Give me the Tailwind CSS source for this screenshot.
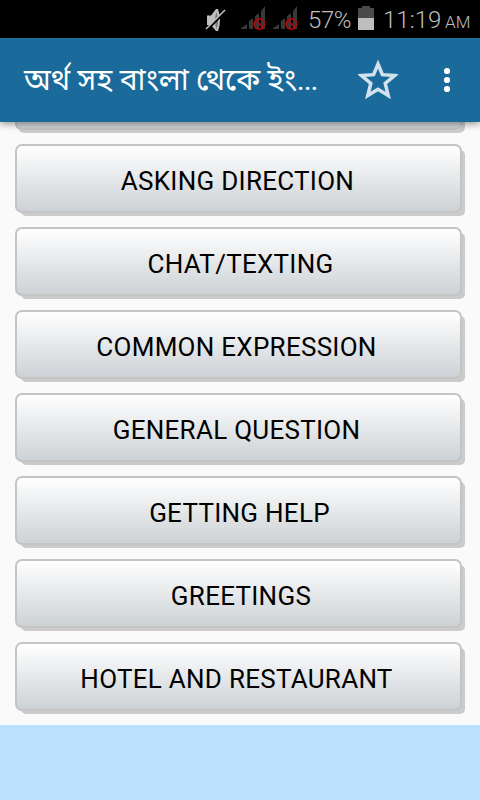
<!DOCTYPE html>
<html lang="bn">
<head>
<meta charset="utf-8">
<title>Phrasebook</title>
<script src="https://cdn.jsdelivr.net/npm/@tailwindcss/browser@4"></script>
</head>
<body class="w-[480px] h-[800px] overflow-hidden bg-[#fafafa] font-['Roboto','Noto_Sans_Bengali',sans-serif] flex flex-col">
<header class="relative z-10 h-[38px] shrink-0 bg-black flex items-center text-[#bebebe]">
  <svg class="ml-[204px] w-[24px] h-[38px] shrink-0" viewBox="204 0 24 38"><path d="M207 15.500h4l5-6.500h2q4 11 0 22h-2l-5-6h-4z" fill="#bebebe"/><path d="M216.500 12q-3 8 0 17 3-8 0-17" fill="#777"/><path d="M206.500 30.500L225.500 11.500" stroke="#000" stroke-width="2.200"/><path d="M206 29L225 10" stroke="#bebebe" stroke-width="1.600"/></svg>
  <svg class="ml-[12px] w-[60px] h-[38px] shrink-0" viewBox="240 0 60 38">
    <g id="signal"><path d="M241 29v-1l6-4v5zM249 29v-8l4-3v11zM255 29V16l4-3v16zM261 29V11l4-5v23z" fill="#383838"/><circle cx="259.300" cy="24" r="5.200" fill="none" stroke="#a80d0d" stroke-width="1.700"/><path d="M255.600 20.300l7.400 7.400" stroke="#a80d0d" stroke-width="1.700"/></g>
    <use href="#signal" x="32"/>
  </svg>
  <span class="ml-[8px] w-[50px] text-[24px] leading-[38px] whitespace-nowrap pt-[2px] tracking-[-0.4px] font-light">57%</span>
  <svg class="w-[16px] h-[38px] shrink-0" viewBox="358 0 16 38"><path d="M358 8h4V6h8v2h4v10h-16z" fill="#4b4b4b"/><path d="M358 18h16v12h-16z" fill="#bebebe"/></svg>
  <span class="ml-[9px] w-[59px] text-[24px] leading-[38px] whitespace-nowrap pt-[2px] font-light">11:19</span>
  <span class="ml-[3px] text-[17px] leading-[38px] whitespace-nowrap pt-[6px] font-light">AM</span>
</header>
<nav class="relative z-10 h-[84px] shrink-0 bg-[#1a6a9b] flex items-center text-white shadow-[0_2px_7px_rgba(0,0,0,0.4)]">
  <h1 class="ml-[24px] w-[310px] text-[30px] leading-[40px] whitespace-nowrap">অর্থ সহ বাংলা থেকে ইং<span class="tracking-[-1px]">...</span></h1>
  <svg class="ml-[24px] w-[40px] h-[84px] shrink-0" viewBox="358 38 40 84"><path d="M378 64l4.400 10.700 12.200.9-9.400 7.900 3 12-10.200-6.300-10.200 6.300 3-12-9.400-7.900 12.200-.9z" fill="none" stroke="#d2e2ec" stroke-width="3.500"/></svg>
  <svg class="ml-[42px] w-[14px] h-[84px] shrink-0" viewBox="440 38 14 84" fill="#fff"><circle cx="447" cy="71" r="3.100"/><circle cx="447" cy="80" r="3.100"/><circle cx="447" cy="89" r="3.100"/></svg>
</nav>
<main class="h-[603px] shrink-0 overflow-hidden">
  <div class="flex flex-col gap-[14px] pl-[15px] -mt-[61px] text-[26px] tracking-[0.27px] text-black whitespace-nowrap">
    <div class="w-[447px] h-[69px] shrink-0 rounded-[6px] border-2 border-[#c4c4c4] bg-linear-to-b from-white to-[#cdd2d6] shadow-[3px_3px_0_#cbcbcb]"></div>
    <button class="relative w-[450px] h-[69px] shrink-0"><span class="absolute left-[6px] top-[6px] w-[444px] h-[66px] rounded-[5px] bg-[#cbcbcb]"></span><span class="relative flex w-[447px] h-[69px] items-center justify-center rounded-[7px] border-2 border-[#c4c4c4] bg-linear-to-b from-white to-[#cdd2d6] pt-[5px] pr-[2px]">ASKING DIRECTION</span></button>
    <button class="relative w-[450px] h-[69px] shrink-0"><span class="absolute left-[6px] top-[6px] w-[444px] h-[66px] rounded-[5px] bg-[#cbcbcb]"></span><span class="relative flex w-[447px] h-[69px] items-center justify-center rounded-[7px] border-2 border-[#c4c4c4] bg-linear-to-b from-white to-[#cdd2d6] pt-[5px] pl-[4px]">CHAT/TEXTING</span></button>
    <button class="relative w-[450px] h-[69px] shrink-0"><span class="absolute left-[6px] top-[6px] w-[444px] h-[66px] rounded-[5px] bg-[#cbcbcb]"></span><span class="relative flex w-[447px] h-[69px] items-center justify-center rounded-[7px] border-2 border-[#c4c4c4] bg-linear-to-b from-white to-[#cdd2d6] pt-[5px] pr-[4px]">COMMON EXPRESSION</span></button>
    <button class="relative w-[450px] h-[69px] shrink-0"><span class="absolute left-[6px] top-[6px] w-[444px] h-[66px] rounded-[5px] bg-[#cbcbcb]"></span><span class="relative flex w-[447px] h-[69px] items-center justify-center rounded-[7px] border-2 border-[#c4c4c4] bg-linear-to-b from-white to-[#cdd2d6] pt-[5px] pr-[4px]">GENERAL QUESTION</span></button>
    <button class="relative w-[450px] h-[69px] shrink-0"><span class="absolute left-[6px] top-[6px] w-[444px] h-[66px] rounded-[5px] bg-[#cbcbcb]"></span><span class="relative flex w-[447px] h-[69px] items-center justify-center rounded-[7px] border-2 border-[#c4c4c4] bg-linear-to-b from-white to-[#cdd2d6] pt-[5px] pl-[2px]">GETTING HELP</span></button>
    <button class="relative w-[450px] h-[69px] shrink-0"><span class="absolute left-[6px] top-[6px] w-[444px] h-[66px] rounded-[5px] bg-[#cbcbcb]"></span><span class="relative flex w-[447px] h-[69px] items-center justify-center rounded-[7px] border-2 border-[#c4c4c4] bg-linear-to-b from-white to-[#cdd2d6] pt-[5px] pl-[5px]">GREETINGS</span></button>
    <button class="relative w-[450px] h-[69px] shrink-0"><span class="absolute left-[6px] top-[6px] w-[444px] h-[66px] rounded-[5px] bg-[#cbcbcb]"></span><span class="relative flex w-[447px] h-[69px] items-center justify-center rounded-[7px] border-2 border-[#c4c4c4] bg-linear-to-b from-white to-[#cdd2d6] pt-[5px] pr-[4px]">HOTEL AND RESTAURANT</span></button>
  </div>
</main>
<footer class="h-[75px] shrink-0 bg-[#bbe1ff]"></footer>
</body>
</html>
